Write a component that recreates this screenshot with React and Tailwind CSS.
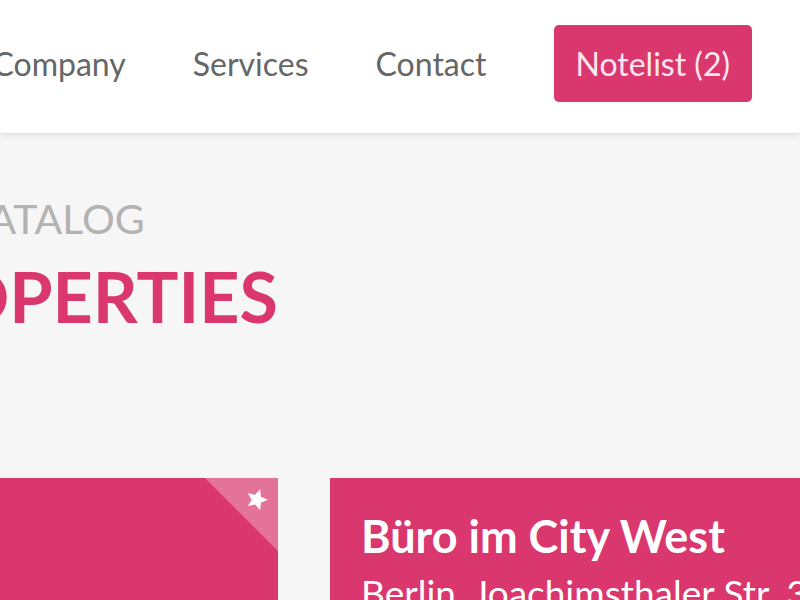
import React from 'react';

const navItems = ['Company', 'Services', 'Contact'];

const Star = () => (
  <svg viewBox="0 0 24 24" className="h-[24px] w-[24px] rotate-[18deg]" fill="white">
    <polygon points="12,1.5 15,8.6 22.6,9.3 16.8,14.3 18.5,21.8 12,17.8 5.5,21.8 7.2,14.3 1.4,9.3 9,8.6" />
  </svg>
);

export default function App() {
  return (
    <div className="w-[800px] h-[600px] overflow-hidden bg-[#f6f6f6] font-['Lato',sans-serif]">
      <header className="relative z-10 h-[133px] pb-[6px] bg-white shadow-[0_2px_6px_rgba(0,0,0,0.1)] flex items-center justify-end pr-[48px]">
        <nav className="flex items-center gap-[67px]">
          {navItems.map((item) => (
            <a key={item} className="text-[32px] text-[#666666] whitespace-nowrap">
              {item}
            </a>
          ))}
          <button className="h-[77px] px-[22px] rounded-[5px] bg-[#d9376d] text-[32px] text-[#fce6ee] whitespace-nowrap">
            Notelist (2)
          </button>
        </nav>
      </header>

      <section className="pt-[65px]">
        <div className="-ml-[39px] text-[41px] leading-none text-[#b3b3b3] whitespace-nowrap">CATALOG</div>
        <h1 className="-ml-[135px] mt-[22px] text-[70px] leading-none font-bold text-[#d9376d] whitespace-nowrap">
          PROPERTIES
        </h1>
      </section>

      <section className="mt-[147px] flex gap-[52px] -ml-[170px]">
        <div className="relative shrink-0 w-[448px] h-[300px] bg-[#d9376d]">
          <div className="absolute top-0 right-0 w-[73px] h-[73px] bg-white/30 [clip-path:polygon(0_0,100%_0,100%_100%)]" />
          <div className="absolute top-[9px] right-[9px]">
            <Star />
          </div>
        </div>
        <div className="shrink-0 w-[520px] h-[300px] bg-[#d9376d] px-[31px] pt-[36px] text-white">
          <h2 className="text-[45px] leading-none font-bold whitespace-nowrap">Büro im City West</h2>
          <p className="mt-[15px] text-[37px] leading-none whitespace-nowrap">Berlin, Joachimsthaler Str. 39</p>
        </div>
      </section>
    </div>
  );
}
